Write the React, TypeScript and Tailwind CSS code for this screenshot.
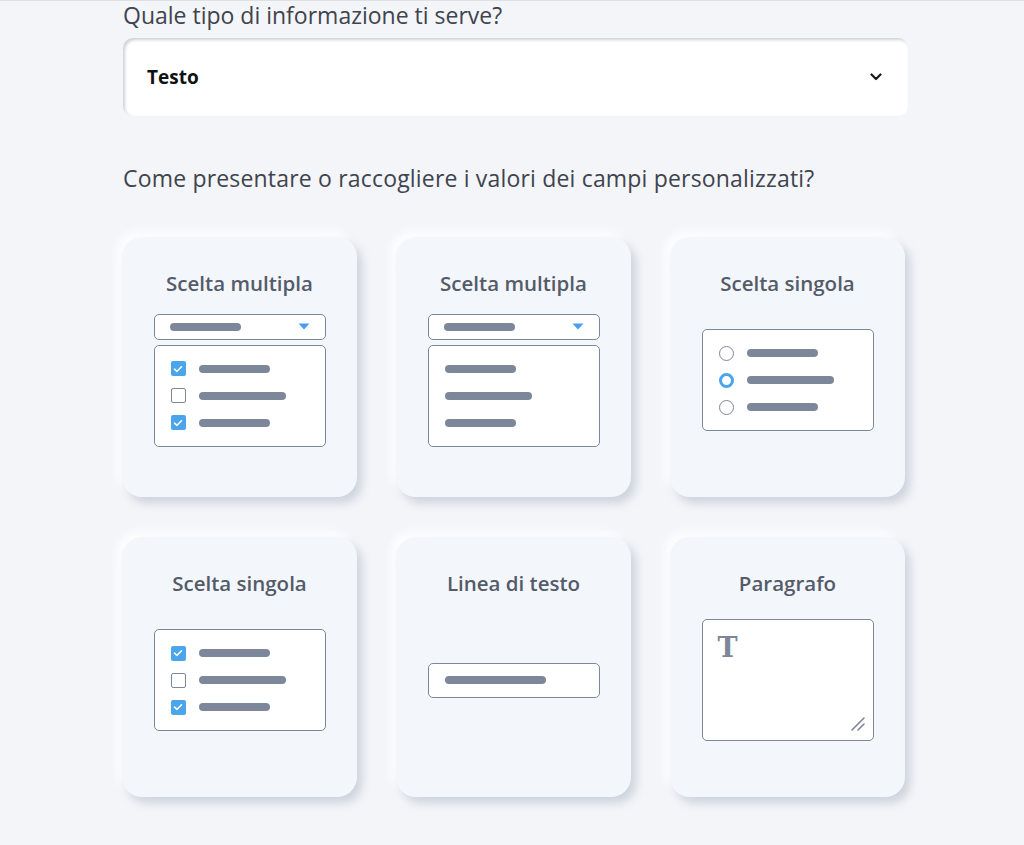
import React from "react";

const font = { fontFamily: "'Open Sans', 'Noto Sans', sans-serif" };

function Bar({ w }: { w: number }) {
  return <div className="h-[8px] rounded-full bg-[#7c8899]" style={{ width: w }} />;
}

function Check({ on }: { on: boolean }) {
  if (on)
    return (
      <div className="w-[15px] h-[15px] rounded-[2px] bg-[#4aa5ea] flex items-center justify-center">
        <svg width="10" height="8" viewBox="0 0 10 8">
          <path d="M1.5 4.2 L4 6.3 L8.5 1.8" fill="none" stroke="#fff" strokeWidth="1.6" strokeLinecap="round" strokeLinejoin="round" />
        </svg>
      </div>
    );
  return <div className="w-[15px] h-[15px] rounded-[2px] bg-white border-[1.5px] border-[#7c8899]" />;
}

function Radio({ on }: { on: boolean }) {
  if (on) return <div className="w-[15px] h-[15px] rounded-full bg-white border-[3.5px] border-[#4aa5ea]" />;
  return <div className="w-[15px] h-[15px] rounded-full bg-white border-[1.5px] border-[#7c8899]" />;
}

function DropHead() {
  return (
    <div className="w-[172px] h-[26px] rounded-[5px] border-[1.5px] border-[#7c8899] bg-white flex items-center justify-between pl-[15px] pr-[15px]">
      <Bar w={71} />
      <svg width="12" height="7" viewBox="0 0 12 7">
        <path d="M0.5 0.5 L11.5 0.5 L6 6.5 Z" fill="#4a9df0" />
      </svg>
    </div>
  );
}

function ListBox({ kind }: { kind: "check" | "radio" | "none" }) {
  const rows: [boolean, number][] = [
    [true, 71],
    [false, 87],
    [true, 71],
  ];
  return (
    <div className="w-[172px] h-[102px] rounded-[5px] border-[1.5px] border-[#7c8899] bg-white flex flex-col justify-center gap-[12px] pl-[16px]">
      {rows.map(([on, w], i) => (
        <div key={i} className="flex items-center gap-[13px] h-[15px]">
          {kind === "check" && <Check on={on} />}
          {kind === "radio" && <Radio on={i === 1} />}
          <Bar w={w} />
        </div>
      ))}
    </div>
  );
}

function Card({ title, children }: { title: string; children: React.ReactNode }) {
  return (
    <div className="h-[260px] rounded-[20px] bg-[#f3f6fa] shadow-[5px_6px_10px_rgba(160,170,185,0.45),-5px_-5px_10px_rgba(255,255,255,0.95)] flex flex-col items-center pt-[34px]">
      <div className="h-[24px] leading-[24px] text-[20.5px] font-semibold text-[#545b69]">{title}</div>
      <div className="h-[170px] flex flex-col items-center justify-center">{children}</div>
    </div>
  );
}

export default function App() {
  return (
    <div className="min-h-[845px] bg-[#f3f5f9] border-t border-[#dde1e6]" style={font}>
      <div className="ml-[122px] w-[786px]">
        <div className="h-[29px] leading-[29px] text-[23px] text-[#40444d] pl-[1px]">Quale tipo di informazione ti serve?</div>
        <div className="mt-[8px] ml-[1px] h-[78px] rounded-[10px] bg-white shadow-[inset_2px_2px_3px_rgba(150,155,165,0.45)] flex items-center justify-between pl-[24px] pr-[26px]">
          <span className="text-[19px] font-bold text-[#111]">Testo</span>
          <svg width="12" height="8" viewBox="0 0 12 8">
            <path d="M1.5 1.5 L6 6 L10.5 1.5" fill="none" stroke="#1a1a1a" strokeWidth="2.2" strokeLinecap="round" strokeLinejoin="round" />
          </svg>
        </div>
        <div className="mt-[47px] h-[30px] leading-[30px] text-[23px] tracking-[0.18px] text-[#40444d] pl-[1px]">
          Come presentare o raccogliere i valori dei campi personalizzati?
        </div>
        <div className="mt-[44px] grid grid-cols-3 gap-x-[39px] gap-y-[40px] w-[783px]">
          <Card title="Scelta multipla">
            <DropHead />
            <div className="h-[5px]" />
            <ListBox kind="check" />
          </Card>
          <Card title="Scelta multipla">
            <DropHead />
            <div className="h-[5px]" />
            <ListBox kind="none" />
          </Card>
          <Card title="Scelta singola">
            <ListBox kind="radio" />
          </Card>
          <Card title="Scelta singola">
            <ListBox kind="check" />
          </Card>
          <Card title="Linea di testo">
            <div className="w-[172px] h-[35px] rounded-[5px] border-[1.5px] border-[#7c8899] bg-white flex items-center pl-[16px]">
              <Bar w={101} />
            </div>
          </Card>
          <Card title="Paragrafo">
            <div className="relative w-[172px] h-[122px] rounded-[5px] border-[1.5px] border-[#7c8899] bg-white">
              <span
                className="absolute left-[15px] top-[13px] text-[27px] leading-[30px] font-bold text-[#7c8899]"
                style={{ fontFamily: "'DejaVu Serif', 'Liberation Serif', serif" }}
              >
                T
              </span>
              <svg className="absolute right-[8px] bottom-[9px]" width="14" height="14" viewBox="0 0 14 14">
                <path d="M1 13 L13 1 M7 13 L13 7" fill="none" stroke="#7c8899" strokeWidth="1.6" strokeLinecap="round" />
              </svg>
            </div>
          </Card>
        </div>
      </div>
    </div>
  );
}
